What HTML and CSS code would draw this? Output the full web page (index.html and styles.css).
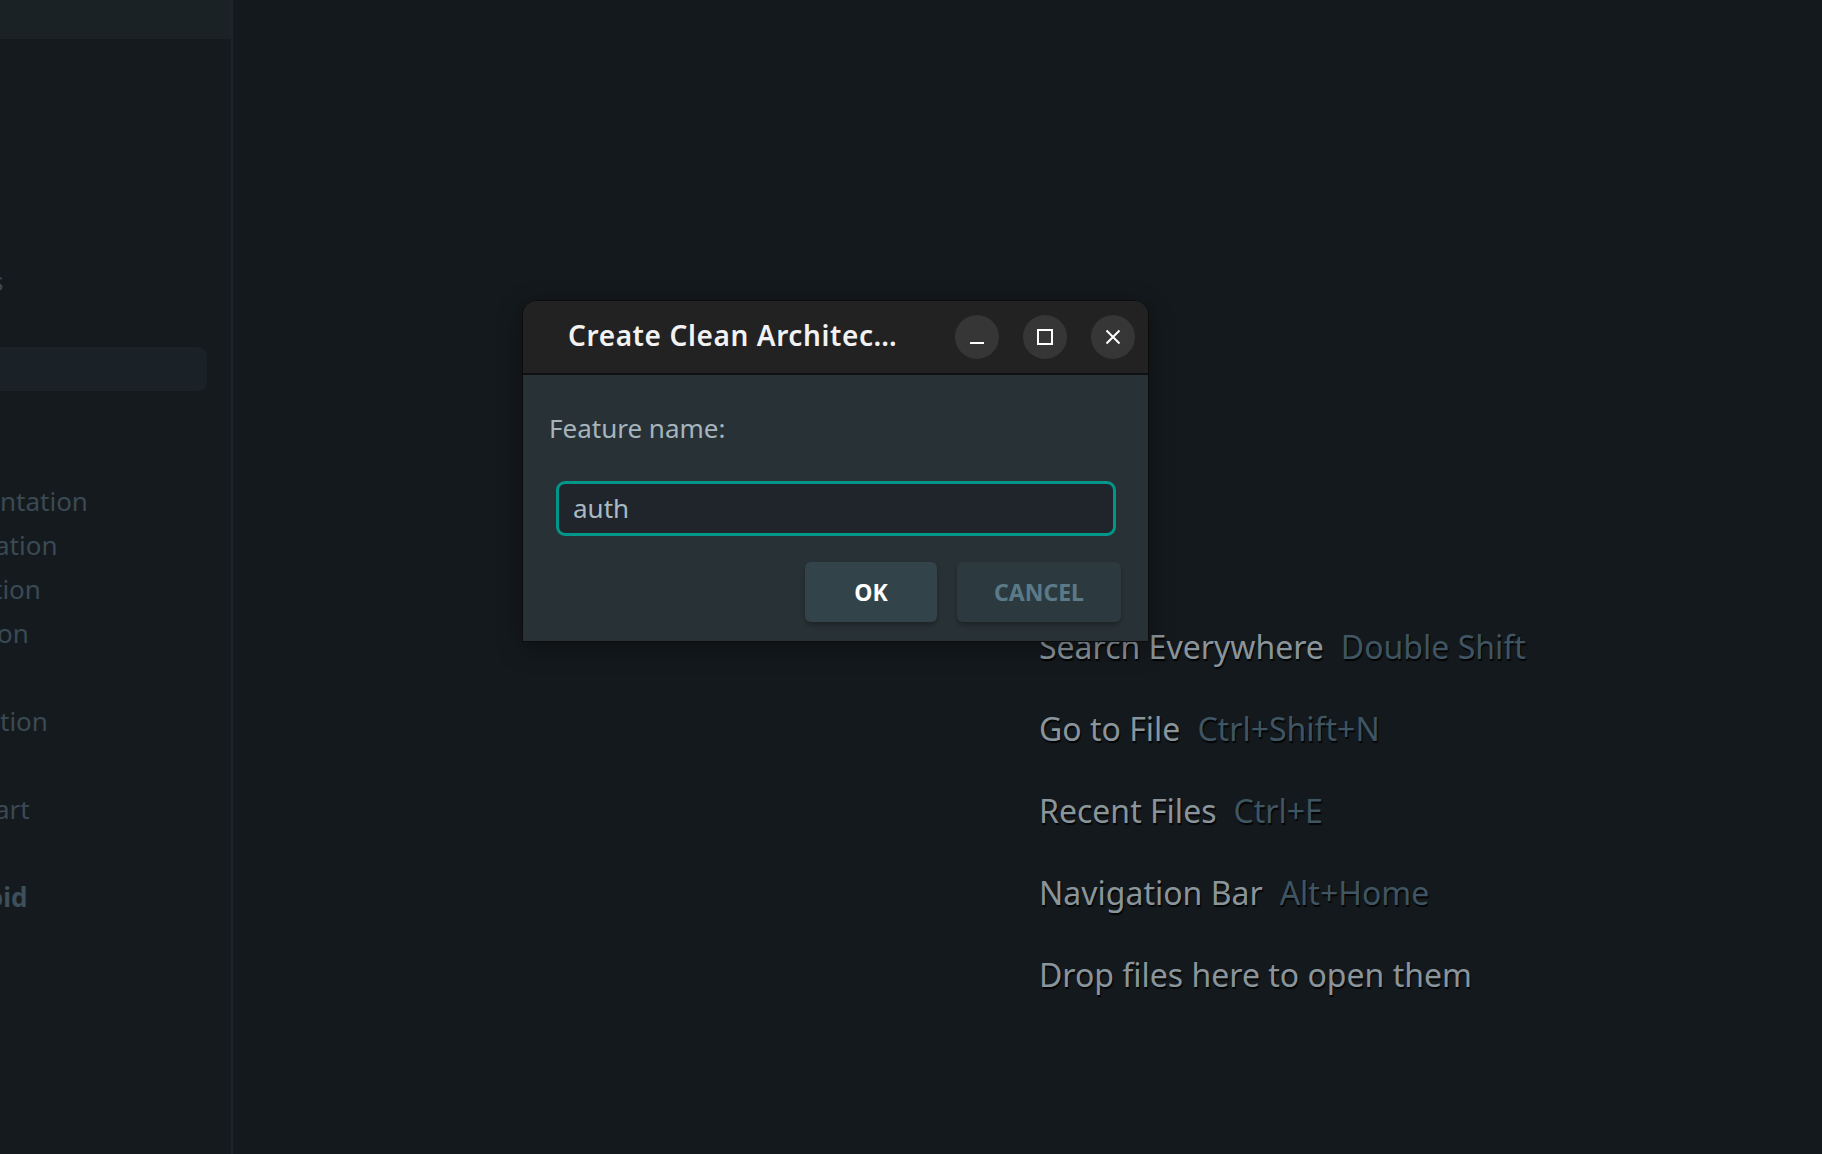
FILE: index.html
```html
<!DOCTYPE html>
<html lang="en">
<head>
<meta charset="utf-8">
<title>Create Clean Architecture Feature</title>
<link rel="stylesheet" href="styles.css">
</head>
<body>
<div class="ide">
  <aside class="side">
    <div class="side-top"></div>
    <ul class="tree">
      <li class="row"><span class="frag frag-s">s</span></li>
      <li class="row"></li>
      <li class="row selected"></li>
      <li class="row"></li>
      <li class="row"></li>
      <li class="row">ntation</li>
      <li class="row cut-5">ation</li>
      <li class="row cut-7">tion</li>
      <li class="row cut-3">on</li>
      <li class="row"></li>
      <li class="row">tion</li>
      <li class="row"></li>
      <li class="row cut-5">art</li>
      <li class="row"></li>
      <li class="row bold cut-13">oid</li>
    </ul>
  </aside>
  <main class="editor">
    <ul class="hints">
      <li class="hint"><span class="act">Search Everywhere</span><span class="key">Double Shift</span></li>
      <li class="hint"><span class="act">Go to File</span><span class="key">Ctrl+Shift+N</span></li>
      <li class="hint"><span class="act">Recent Files</span><span class="key">Ctrl+E</span></li>
      <li class="hint"><span class="act">Navigation Bar</span><span class="key">Alt+Home</span></li>
      <li class="hint"><span class="act">Drop files here to open them</span></li>
    </ul>
  </main>
</div>

<div class="dialog">
  <div class="titlebar">
    <div class="title">Create Clean Architec…</div>
    <button class="wbtn" aria-label="Minimize">
      <svg width="18" height="18" viewBox="0 0 18 18"><path d="M2 15H16" stroke="#ffffff" stroke-width="2" fill="none"/></svg>
    </button>
    <button class="wbtn" aria-label="Maximize">
      <svg width="18" height="18" viewBox="0 0 18 18"><rect x="2" y="2" width="14" height="14" stroke="#ffffff" stroke-width="2" fill="none"/></svg>
    </button>
    <button class="wbtn" aria-label="Close">
      <svg width="18" height="18" viewBox="0 0 18 18"><path d="M2.5 2.5L15.5 15.5M15.5 2.5L2.5 15.5" stroke="#ffffff" stroke-width="2" fill="none"/></svg>
    </button>
  </div>
  <div class="dbody">
    <label class="label" for="fname">Feature name:</label>
    <div class="field"><input id="fname" class="input" type="text" value="auth"></div>
    <div class="actions">
      <button class="btn ok">OK</button>
      <button class="btn cancel">CANCEL</button>
    </div>
  </div>
</div>
</body>
</html>
```

FILE: styles.css
```css
* { box-sizing: border-box; }

html, body {
  margin: 0;
  padding: 0;
  width: 1822px;
  height: 1154px;
  overflow: hidden;
  background: #14191d;
  font-family: "Noto Sans", "Open Sans", sans-serif;
}

.ide {
  display: flex;
  height: 1154px;
}

.side {
  width: 233px;
  flex: none;
  background: #151a1e;
  border-right: 2px solid #1d2429;
  overflow: hidden;
  display: flex;
  flex-direction: column;
}

.side-top {
  height: 39px;
  background: #1b2226;
  margin-right: -2px;
}

.tree {
  list-style: none;
  margin: 0;
  padding: 220px 0 0 0;
}

.row {
  height: 44px;
  line-height: 44px;
  font-size: 26px;
  color: #3a4a54;
  white-space: nowrap;
  overflow: hidden;
  width: 207px;
}

.row.selected {
  background: #1b2227;
  border-radius: 0 9px 9px 0;
}

.row.bold {
  font-weight: 700;
  color: #3d4f5a;
}

.cut-3 { text-indent: -3px; }
.cut-5 { text-indent: -5px; }
.cut-7 { text-indent: -7px; }
.cut-13 { text-indent: -13px; }

.frag-s {
  display: inline-block;
  text-indent: -9px;
}

.editor {
  flex: 1;
  background: #14191d;
}

.hints {
  list-style: none;
  margin: 0;
  padding: 606px 0 0 806px;
}

.hint {
  height: 82px;
  line-height: 82px;
  font-size: 32px;
  white-space: nowrap;
  text-shadow: 1px 2px 1px rgba(0, 0, 0, 0.85);
}

.act {
  color: #8a959b;
}

.key {
  color: #3f5562;
  margin-left: 17px;
}

/* dialog overlay */
.dialog {
  position: absolute;
  left: 522px;
  top: 300px;
  width: 627px;
  height: 342px;
  border: 1px solid #0c0c0c;
  border-radius: 15px 15px 0 0;
  background: #283136;
  overflow: hidden;
  box-shadow: 0 6px 24px rgba(0, 0, 0, 0.35);
  display: flex;
  flex-direction: column;
}

.titlebar {
  height: 74px;
  flex: none;
  background: #222222;
  border-bottom: 2px solid #101010;
  display: flex;
  align-items: center;
  padding: 0 13px 0 45px;
  gap: 24px;
}

.title {
  flex: 1;
  color: #f2f2f2;
  font-size: 28px;
  font-weight: 600;
  letter-spacing: 0.6px;
  line-height: 36px;
  margin-top: -4px;
  white-space: nowrap;
  overflow: hidden;
}

.wbtn {
  width: 44px;
  height: 44px;
  border-radius: 50%;
  border: none;
  padding: 0;
  background: #363636;
  display: flex;
  align-items: center;
  justify-content: center;
}

.dbody {
  flex: 1;
  padding: 35px 27px 0 26px;
  display: flex;
  flex-direction: column;
}

.label {
  font-size: 26px;
  line-height: 36px;
  color: #a6b5bd;
}

.field {
  margin: 35px 5px 0 7px;
}

.input {
  display: block;
  width: 100%;
  height: 55px;
  border: 3px solid #00978a;
  border-radius: 9px;
  background: #1f252b;
  color: #a9bac4;
  font-family: "Noto Sans", "Open Sans", sans-serif;
  font-size: 26px;
  padding: 0 14px 2px;
  outline: none;
}

.actions {
  margin-top: 26px;
  display: flex;
  justify-content: flex-end;
  gap: 20px;
}

.btn {
  height: 60px;
  border: none;
  border-radius: 6px;
  font-family: "Noto Sans", "Open Sans", sans-serif;
  font-size: 23px;
  font-weight: 700;
  box-shadow: 0 3px 4px rgba(0, 0, 0, 0.25);
}

.btn.ok {
  width: 132px;
  background: #324449;
  color: #ffffff;
}

.btn.cancel {
  width: 164px;
  background: #2c3a40;
  color: #5b7a88;
}
```
